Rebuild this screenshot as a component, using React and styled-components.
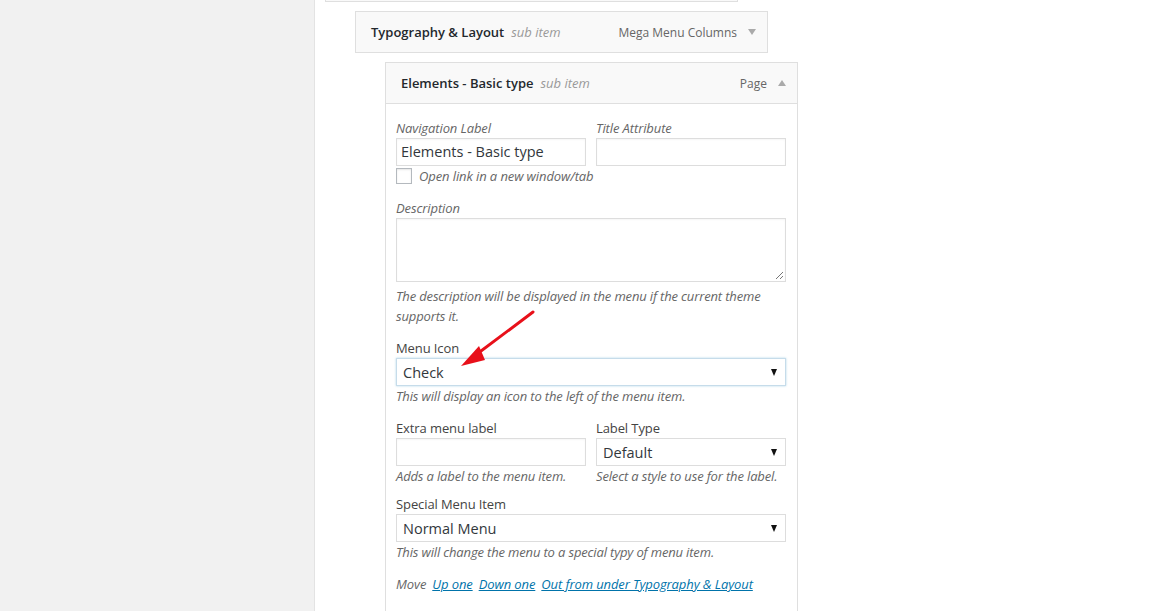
import React from 'react';
import styled, { createGlobalStyle } from 'styled-components';

const GlobalStyle = createGlobalStyle`
  html, body {
    margin: 0;
    padding: 0;
    background: #fff;
    font-family: "Open Sans", "Liberation Sans", sans-serif;
    font-size: 13px;
    color: #444;
  }
`;

const Page = styled.div`
  display: flex;
  width: 1154px;
  height: 611px;
  overflow: hidden;
`;

const Sidebar = styled.div`
  width: 314px;
  flex: none;
  background: #f1f1f1;
  border-right: 1px solid #e3e3e3;
`;

const Main = styled.div`
  flex: 1;
  background: #fff;
  display: flex;
  flex-direction: column;
  gap: 9px;
  margin-top: -40px;
`;

const MenuItem = styled.div`
  width: 413px;
  margin-left: ${(p) => 10 + p.depth * 30}px;
  box-sizing: border-box;
  border: 1px solid #dfdfdf;
  background: #f9f9f9;
`;

const ItemHandle = styled.div`
  display: flex;
  align-items: center;
  padding: 0 11px 0 15px;
  box-sizing: border-box;
  border-bottom: ${(p) => (p.open ? '1px solid #dfdfdf' : 'none')};
  height: ${(p) => (p.open ? 41 : 40)}px;
`;

const ItemTitle = styled.span`
  font-weight: 600;
  color: #23282d;
  font-size: 13px;
`;

const SubItem = styled.span`
  font-style: italic;
  color: #999;
  margin-left: 7px;
`;

const ItemType = styled.span`
  margin-left: auto;
  color: #666;
  font-size: 12px;
`;

const Toggle = styled.span`
  width: 0;
  height: 0;
  margin-left: 11px;
  border-left: 4px solid transparent;
  border-right: 4px solid transparent;
  ${(p) => (p.up ? 'border-bottom: 6px solid #aaa;' : 'border-top: 6px solid #aaa;')}
`;

const Settings = styled.div`
  position: relative;
  background: #fff;
  padding: 15px 10px 20px 10px;
  min-height: 520px;
`;

const Row = styled.div`
  display: flex;
  gap: 10px;
  margin-bottom: ${(p) => p.mb ?? 13}px;
`;

const Field = styled.div`
  width: ${(p) => (p.wide ? 390 : 190)}px;
  margin-top: ${(p) => p.mt ?? 0}px;
  margin-bottom: ${(p) => p.mb ?? 0}px;
`;

const Label = styled.div`
  font-size: 13px;
  line-height: 18px;
  height: 19px;
  letter-spacing: -0.1px;
  color: ${(p) => (p.italic ? '#666' : '#444')};
  font-style: ${(p) => (p.italic ? 'italic' : 'normal')};
`;

const Input = styled.div`
  box-sizing: border-box;
  height: 28px;
  border: 1px solid #ddd;
  background: #fff;
  padding: 0 4px;
  font-size: 14.5px;
  line-height: 26px;
  color: #32373c;
  box-shadow: inset 0 1px 2px rgba(0, 0, 0, 0.04);
`;

const Select = styled.div`
  box-sizing: border-box;
  height: 28px;
  border: 1px solid ${(p) => (p.focus ? '#c6dcea' : '#ddd')};
  ${(p) => p.focus && 'box-shadow: 0 0 2px rgba(30, 140, 190, 0.35);'}
  background: #fff;
  padding: 0 8px 0 6px;
  display: flex;
  align-items: center;
  justify-content: space-between;
  font-size: 14.5px;
  color: #32373c;
`;

const Caret = styled.span`
  width: 0;
  height: 0;
  border-left: 3.5px solid transparent;
  border-right: 3.5px solid transparent;
  border-top: 7px solid #111;
`;

const TextArea = styled.div`
  position: relative;
  box-sizing: border-box;
  height: 64px;
  border: 1px solid #ddd;
  background: #fff;
  box-shadow: inset 0 1px 2px rgba(0, 0, 0, 0.04);
`;

const Grip = styled.svg`
  position: absolute;
  right: 1px;
  bottom: 1px;
`;

const Help = styled.div`
  font-style: italic;
  color: #666;
  font-size: 13px;
  line-height: 20px;
  letter-spacing: -0.15px;
  margin-top: ${(p) => p.mt ?? 0}px;
`;

const CheckRow = styled.label`
  display: flex;
  align-items: center;
  height: 20px;
  font-style: italic;
  color: #666;
  font-size: 13px;
  letter-spacing: -0.1px;
`;

const Checkbox = styled.span`
  width: 16px;
  height: 16px;
  box-sizing: border-box;
  border: 1px solid #b4b9be;
  background: #fff;
  margin-right: 7px;
  box-shadow: inset 0 1px 2px rgba(0, 0, 0, 0.1);
`;

const MoveRow = styled.div`
  display: flex;
  gap: 6px;
  font-style: italic;
  color: #666;
  line-height: 20px;
  letter-spacing: -0.1px;
`;

const MoveLink = styled.a`
  color: #0073aa;
  text-decoration: underline;
`;

const Arrow = styled.svg`
  position: absolute;
  left: 65px;
  top: 204px;
  overflow: visible;
`;

const App = () => (
  <>
    <GlobalStyle />
    <Page>
      <Sidebar />
      <Main>
        <MenuItem depth={0}>
          <ItemHandle />
        </MenuItem>
        <MenuItem depth={1}>
          <ItemHandle>
            <ItemTitle>Typography &amp; Layout</ItemTitle>
            <SubItem>sub item</SubItem>
            <ItemType>Mega Menu Columns</ItemType>
            <Toggle />
          </ItemHandle>
        </MenuItem>
        <MenuItem depth={2}>
          <ItemHandle open>
            <ItemTitle>Elements - Basic type</ItemTitle>
            <SubItem>sub item</SubItem>
            <ItemType>Page</ItemType>
            <Toggle up />
          </ItemHandle>
          <Settings>
            <Row mb={0}>
              <Field>
                <Label italic>Navigation Label</Label>
                <Input>Elements - Basic type</Input>
              </Field>
              <Field>
                <Label italic>Title Attribute</Label>
                <Input />
              </Field>
            </Row>
            <CheckRow>
              <Checkbox />
              Open link in a new window/tab
            </CheckRow>
            <Field wide mt={13} mb={13}>
              <Label italic>Description</Label>
              <TextArea>
                <Grip width="9" height="9" viewBox="0 0 9 9">
                  <path d="M8 1 L1 8 M8 5 L5 8" stroke="#777" strokeWidth="1" />
                </Grip>
              </TextArea>
              <Help mt={4}>
                The description will be displayed in the menu if the current theme supports it.
              </Help>
            </Field>
            <Field wide mb={13}>
              <Label>Menu Icon</Label>
              <Select focus>
                Check
                <Caret />
              </Select>
              <Help>This will display an icon to the left of the menu item.</Help>
            </Field>
            <Row mb={9}>
              <Field>
                <Label>Extra menu label</Label>
                <Input />
                <Help>Adds a label to the menu item.</Help>
              </Field>
              <Field>
                <Label>Label Type</Label>
                <Select>
                  Default
                  <Caret />
                </Select>
                <Help>Select a style to use for the label.</Help>
              </Field>
            </Row>
            <Field wide mb={12}>
              <Label>Special Menu Item</Label>
              <Select>
                Normal Menu
                <Caret />
              </Select>
              <Help>This will change the menu to a special typy of menu item.</Help>
            </Field>
            <MoveRow>
              Move
              <MoveLink>Up one</MoveLink>
              <MoveLink>Down one</MoveLink>
              <MoveLink>Out from under Typography &amp; Layout</MoveLink>
            </MoveRow>
            <Arrow width="80" height="60" viewBox="0 0 80 60">
              <line x1="82" y1="4" x2="22" y2="49" stroke="#e8101a" strokeWidth="3" strokeLinecap="round" />
              <polygon points="10,58 28,38 34,52" fill="#e8101a" />
            </Arrow>
          </Settings>
        </MenuItem>
      </Main>
    </Page>
  </>
);

export default App;
